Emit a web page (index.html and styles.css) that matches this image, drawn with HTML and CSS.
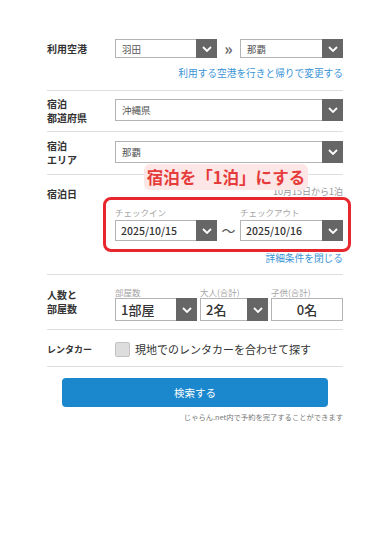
FILE: index.html
```html
<!DOCTYPE html>
<html lang="ja">
<head>
  <meta charset="UTF-8" />
  <meta name="viewport" content="width=device-width, initial-scale=1">
  <title>検索条件</title>
  <link rel="stylesheet" href="styles.css">
</head>
<body>
  <main class="search-form">

    <!-- 利用空港 -->
    <div class="row row-airport">
      <div class="row-label single">利用空港</div>
      <div class="row-body">
        <div class="airport-line">
          <div class="select small">
            <span class="select-text">羽田</span>
            <span class="arrow"><svg width="10" height="6" viewBox="0 0 10 6"><polyline points="1,1 5,5 9,1" fill="none" stroke="#fff" stroke-width="1.8"/></svg></span>
          </div>
          <span class="sep">&raquo;</span>
          <div class="select small">
            <span class="select-text">那覇</span>
            <span class="arrow"><svg width="10" height="6" viewBox="0 0 10 6"><polyline points="1,1 5,5 9,1" fill="none" stroke="#fff" stroke-width="1.8"/></svg></span>
          </div>
        </div>
        <a class="blue-link" href="#">利用する空港を行きと帰りで変更する</a>
      </div>
    </div>

    <!-- 宿泊都道府県 -->
    <div class="row row-pref">
      <div class="row-label">宿泊<br>都道府県</div>
      <div class="row-body">
        <div class="select">
          <span class="select-text">沖縄県</span>
          <span class="arrow"><svg width="10" height="6" viewBox="0 0 10 6"><polyline points="1,1 5,5 9,1" fill="none" stroke="#fff" stroke-width="1.8"/></svg></span>
        </div>
      </div>
    </div>

    <!-- 宿泊エリア -->
    <div class="row row-area">
      <div class="row-label">宿泊<br>エリア</div>
      <div class="row-body">
        <div class="select">
          <span class="select-text">那覇</span>
          <span class="arrow"><svg width="10" height="6" viewBox="0 0 10 6"><polyline points="1,1 5,5 9,1" fill="none" stroke="#fff" stroke-width="1.8"/></svg></span>
        </div>
      </div>
    </div>

    <!-- 宿泊日 -->
    <div class="row row-date">
      <div class="badge">宿泊を「1泊」にする</div>
      <div class="row-label single">宿泊日</div>
      <div class="row-body">
        <div class="date-note">10月15日から1泊</div>
        <div class="date-box">
          <div class="date-grid">
            <span class="sub-label">チェックイン</span>
            <span></span>
            <span class="sub-label">チェックアウト</span>
            <div class="select date">
              <span class="select-text">2025/10/15</span>
              <span class="arrow"><svg width="10" height="6" viewBox="0 0 10 6"><polyline points="1,1 5,5 9,1" fill="none" stroke="#fff" stroke-width="1.8"/></svg></span>
            </div>
            <span class="tilde">〜</span>
            <div class="select date">
              <span class="select-text">2025/10/16</span>
              <span class="arrow"><svg width="10" height="6" viewBox="0 0 10 6"><polyline points="1,1 5,5 9,1" fill="none" stroke="#fff" stroke-width="1.8"/></svg></span>
            </div>
          </div>
        </div>
        <a class="blue-link close-link" href="#">詳細条件を閉じる</a>
      </div>
    </div>

    <!-- 人数と部屋数 -->
    <div class="row row-people">
      <div class="row-label">人数と<br>部屋数</div>
      <div class="row-body">
        <div class="people-grid">
          <span class="sub-label">部屋数</span>
          <span class="sub-label">大人(合計)</span>
          <span class="sub-label">子供(合計)</span>
          <div class="select big">
            <span class="select-text">1部屋</span>
            <span class="arrow"><svg width="10" height="6" viewBox="0 0 10 6"><polyline points="1,1 5,5 9,1" fill="none" stroke="#fff" stroke-width="1.8"/></svg></span>
          </div>
          <div class="select big">
            <span class="select-text">2名</span>
            <span class="arrow"><svg width="10" height="6" viewBox="0 0 10 6"><polyline points="1,1 5,5 9,1" fill="none" stroke="#fff" stroke-width="1.8"/></svg></span>
          </div>
          <div class="count-input">0名</div>
        </div>
      </div>
    </div>

    <!-- レンタカー -->
    <div class="row row-car">
      <div class="row-label single">レンタカー</div>
      <div class="row-body">
        <label class="check">
          <span class="check-box"></span>
          <span>現地でのレンタカーを合わせて探す</span>
        </label>
      </div>
    </div>

    <div class="submit-area">
      <button class="search-btn" type="button">検索する</button>
      <p class="foot-note">じゃらん.net内で予約を完了することができます</p>
    </div>

  </main>
</body>
</html>
```

FILE: styles.css
```css
* {
  margin: 0;
  padding: 0;
  box-sizing: border-box;
}

html, body {
  width: 100%;
  height: 100%;
  background: #ffffff;
  font-family: "Noto Sans CJK JP", "Noto Sans", sans-serif;
  color: #333;
}

a {
  text-decoration: none;
}

.search-form {
  padding: 39px 47px 0;
}

/* Rows */
.row {
  display: flex;
  border-bottom: 1px solid #dedede;
  position: relative;
}

.row-label {
  width: 68px;
  flex-shrink: 0;
  font-size: 10px;
  font-weight: 700;
  line-height: 14px;
  color: #333;
}

.row-body {
  flex: 1;
  min-width: 0;
}

.row-airport {
  padding-bottom: 10px;
}

.row-airport .row-label {
  line-height: 19px;
}

.airport-line {
  display: grid;
  grid-template-columns: 102px 1fr 103px;
  align-items: center;
}

.sep {
  text-align: center;
  color: #6a6a6a;
  font-size: 16px;
  font-weight: 700;
  line-height: 19px;
}

.blue-link {
  display: block;
  text-align: right;
  color: #3a94d6;
  font-size: 9.7px;
  line-height: 14px;
  margin-top: 8px;
}

.row-pref {
  padding: 8px 0 10px;
}

.row-area {
  padding: 9px 0 11px;
}

/* two-line labels hang a little below the select without growing the row */
.row-area .row-label,
.row-pref .row-label {
  margin-top: -2px;
  margin-bottom: -8px;
}

/* Select boxes */
.select {
  display: flex;
  align-items: center;
  height: 22px;
  border: 1px solid #b4b4b4;
  background: #fff;
}

.select.small {
  height: 19px;
}

.select.date {
  height: 21px;
}

.select.big {
  height: 23px;
}

.select-text {
  flex: 1;
  padding-left: 6px;
  font-size: 9.5px;
  color: #555;
  white-space: nowrap;
}

.arrow {
  align-self: stretch;
  width: 21px;
  margin: -1px -1px -1px 0;
  background: #666;
  display: flex;
  align-items: center;
  justify-content: center;
}

/* Stay date */
.row-date {
  padding: 12px 0 10px;
}

.row-date .row-label {
  margin-top: 0;
}

.badge {
  position: absolute;
  top: -11px;
  left: 97px;
  width: 164px;
  height: 26px;
  border-radius: 6px;
  background: #fde6e6;
  color: #e53b3b;
  font-size: 16.5px;
  font-weight: 700;
  line-height: 26px;
  text-align: center;
  z-index: 2;
}

.date-note {
  text-align: right;
  font-size: 9px;
  line-height: 10px;
  color: #999;
}

.date-box {
  margin: 0 -8px 0 -12px;
  border: 3px solid #e8262d;
  border-radius: 8px;
  padding: 6px 5px 8px 9px;
}

.date-grid {
  display: grid;
  grid-template-columns: 102px 1fr 103px;
  row-gap: 2px;
  align-items: center;
}

.sub-label {
  font-size: 8.5px;
  line-height: 12px;
  color: #a5a5a5;
}

.select.date .select-text {
  font-size: 10.5px;
  font-weight: 500;
  color: #333;
  padding-left: 5px;
}

.tilde {
  text-align: center;
  font-size: 14px;
  color: #555;
  line-height: 21px;
}

.close-link {
  margin-top: 0;
  line-height: 12px;
}

/* People */
.row-people {
  padding: 12px 0 8px;
}

.row-people .row-label {
  line-height: 13.5px;
  margin-top: 1px;
}

.people-grid {
  display: grid;
  grid-template-columns: 82px 68px 1fr;
  column-gap: 3px;
  row-gap: 1px;
}

.people-grid .sub-label {
  line-height: 10px;
}

.select.big .select-text {
  font-size: 13px;
  font-weight: 500;
  color: #333;
  padding-left: 5px;
}

.count-input {
  height: 23px;
  border: 1px solid #b4b4b4;
  text-align: center;
  font-size: 13px;
  font-weight: 500;
  line-height: 21px;
  color: #333;
}

/* Rental car */
.row-car {
  padding: 12px 0 9px;
  align-items: center;
}

.row-car .row-label {
  font-size: 9px;
}

.check {
  display: flex;
  align-items: center;
  gap: 5px;
  font-size: 11px;
  color: #333;
  line-height: 15px;
}

.check-box {
  width: 15px;
  height: 15px;
  background: #ddd;
  border: 1px solid #c2c2c2;
  border-radius: 2px;
}

/* Submit */
.submit-area {
  padding-top: 11px;
}

.search-btn {
  display: block;
  width: 266px;
  height: 29px;
  margin: 0 auto;
  border: none;
  border-radius: 4px;
  background: #1b87cd;
  color: #fff;
  font-family: inherit;
  font-size: 10.5px;
}

.foot-note {
  text-align: right;
  font-size: 7.3px;
  color: #777;
  line-height: 10px;
  margin-top: 5px;
}
```
